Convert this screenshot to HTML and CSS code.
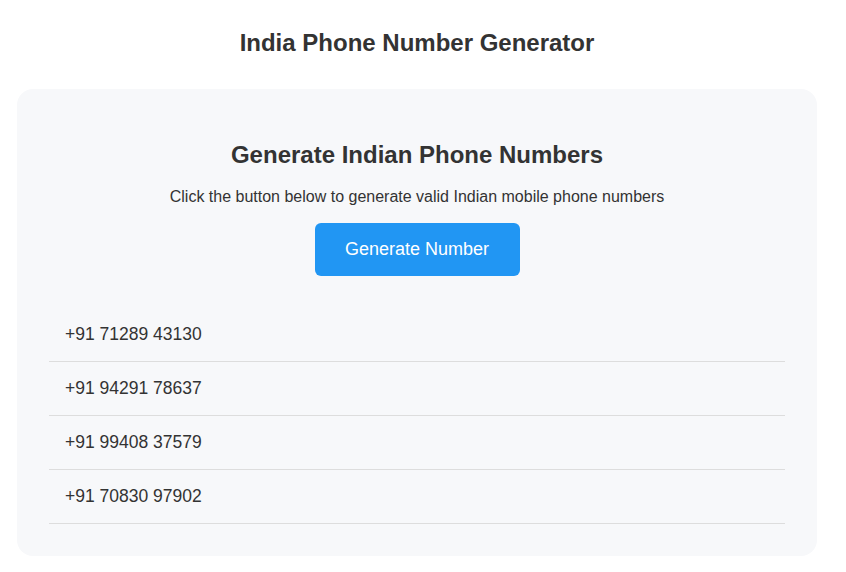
FILE: index.html
```html
<!DOCTYPE html>
<html>
<head>
<meta charset="utf-8">
<link rel="stylesheet" href="styles.css">
</head>
<body>
<div class="page">
  <h1 class="title">India Phone Number Generator</h1>
  <div class="card">
    <h2 class="card-title">Generate Indian Phone Numbers</h2>
    <p class="card-sub">Click the button below to generate valid Indian mobile phone numbers</p>
    <button class="gen-btn">Generate Number</button>
    <ul class="num-list">
      <li class="num-item">+91 71289 43130</li>
      <li class="num-item">+91 94291 78637</li>
      <li class="num-item">+91 99408 37579</li>
      <li class="num-item">+91 70830 97902</li>
    </ul>
  </div>
</div>
</body>
</html>
```
FILE: styles.css
```css
html, body {
  margin: 0;
  padding: 0;
  background: #ffffff;
}
body {
  font-family: "Liberation Sans", Arial, sans-serif;
  color: #333333;
}
.page {
  width: 800px;
  padding: 29px 0 0 17px;
}
.title {
  margin: 0 0 32px;
  font-size: 24px;
  line-height: 28px;
  font-weight: bold;
  text-align: center;
  color: #333333;
}
.card {
  background: #f7f8fa;
  border-radius: 16px;
  padding: 32px;
  display: flex;
  flex-direction: column;
  align-items: center;
}
.card-title {
  margin: 20px 0 19px;
  font-size: 24px;
  line-height: 28px;
  font-weight: bold;
  color: #333333;
}
.card-sub {
  margin: 0 0 17px;
  font-size: 16px;
  line-height: 18px;
  color: #333333;
}
.gen-btn {
  width: 205px;
  height: 53px;
  border: none;
  border-radius: 6px;
  background: #2196f3;
  color: #ffffff;
  font-family: "Liberation Sans", Arial, sans-serif;
  font-size: 18px;
  cursor: pointer;
}
.num-list {
  list-style: none;
  margin: 32px 0 0;
  padding: 0;
  align-self: stretch;
}
.num-item {
  padding: 16px 16px;
  font-size: 17.5px;
  line-height: 21px;
  border-bottom: 1px solid #dddddd;
  color: #333333;
}
```
